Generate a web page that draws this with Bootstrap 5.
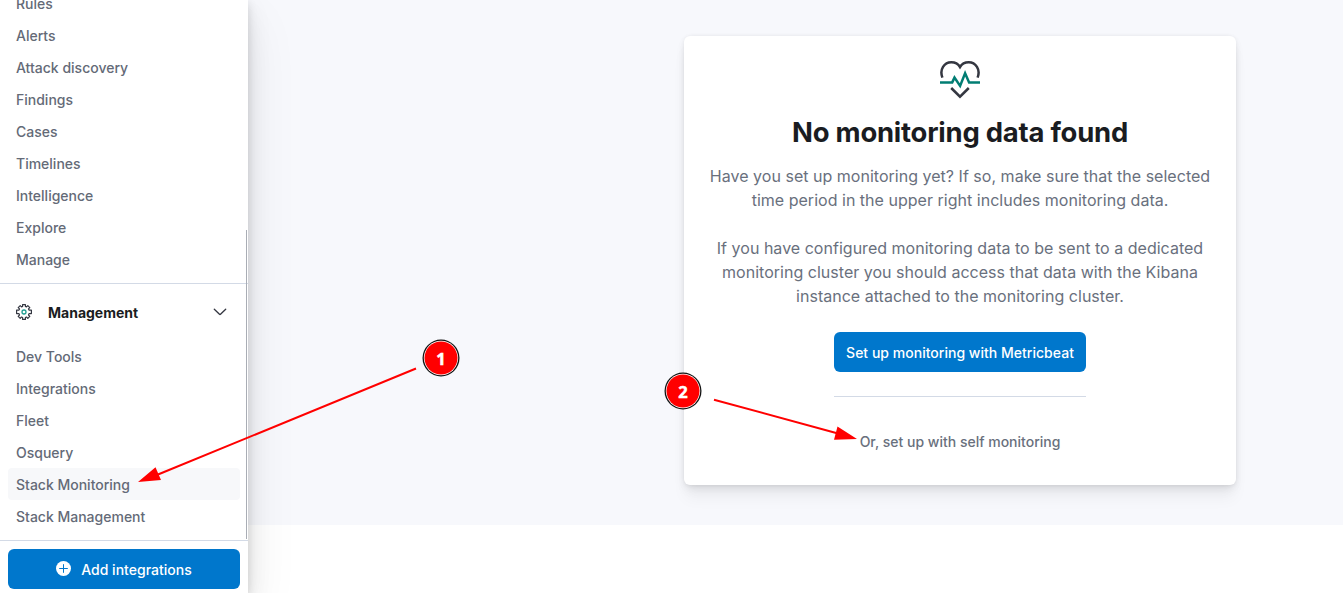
<!DOCTYPE html>
<html lang="en">
<head>
<meta charset="utf-8">
<meta name="viewport" content="width=device-width, initial-scale=1">
<title>Stack Monitoring</title>
<link href="https://cdn.jsdelivr.net/npm/bootstrap@5.3.0/dist/css/bootstrap.min.css" rel="stylesheet">
<style>
  body { font-family: Inter, sans-serif; font-size: 14px; color: #69707d; height: 100vh; overflow: hidden; background: #fff; }
  .side { width: 248px; z-index: 2; box-shadow: 0 2.7px 9px rgba(0,0,0,.13), 0 9.4px 24px rgba(0,0,0,.09), 0 21.8px 50px rgba(0,0,0,.08); }
  .side-scroll { height: 540px; }
  .side-list { padding: 0 8px; }
  .side-list.first { margin-top: -12px; }
  .side-list .nav-link { height: 32px; padding: 0 8px; line-height: 32px; color: #646a77; font-weight: 500; border-radius: 4px; }
  .side-list.lower .nav-link { line-height: 34px; }
  .side-list .nav-link.active { background: #f7f8fa; }
  .group-head { margin-top: 7px; border-top: 1px solid #d3dae6; height: 57px; padding: 0 20px 0 16px; color: #1a1c21; }
  .group-title { font-weight: 700; letter-spacing: 0; margin-left: 16px; }
  .scroll-thumb { right: 1px; top: 230px; width: 1px; height: 309px; background: #a9adb5; }
  .side-foot { border-top: 1px solid #d3dae6; padding: 8px; height: 53px; }
  .btn-fill { height: 40px; background: #0077cc; color: #fff; font-size: 14px; font-weight: 500; letter-spacing: .02px; border-radius: 6px; border: 0; padding: 0 8px; white-space: nowrap; }
  .btn-fill:hover { background: #0071c2; color: #fff; }
  .btn-fill svg { margin-right: 1px; }
  .page-area { height: 525px; background: #f7f8fc; padding: 36px 107px 0 0; }
  .prompt { width: 552px; height: 449px; border: 0; border-radius: 6px; padding: 24px; color: #69707d;
    box-shadow: 0 .9px 4px -1px rgba(0,0,0,.08), 0 2.6px 8px -1px rgba(0,0,0,.06), 0 5.7px 12px -1px rgba(0,0,0,.05), 0 15px 15px -1px rgba(0,0,0,.04); }
  .prompt h2 { font-size: 27.43px; line-height: 32px; font-weight: 700; color: #1a1c21; margin: 16px 0; letter-spacing: -.22px; }
  .prompt p { font-size: 16px; line-height: 24px; margin: 0 0 24px; letter-spacing: .02px; }
  .prompt .btn-fill { width: 252px; }
  .divider { width: 252px; height: 1px; background: #d3dae6; margin: 24px 0; }
  .btn-plain { height: 40px; padding: 0 8px; font-size: 14px; font-weight: 500; color: #69707d; border: 0; }
  .annotations { z-index: 5; pointer-events: none; }
  .annotations text { font-family: "Noto Sans", sans-serif; font-weight: 700; font-size: 16.500px; fill: #fff; stroke: #fff; stroke-width: .5px; text-anchor: middle; }
</style>
</head>
<body>
<div class="d-flex h-100">
  <aside class="side bg-white position-relative flex-shrink-0 d-flex flex-column">
    <div class="side-scroll overflow-hidden">
      <nav class="side-list first nav flex-column flex-nowrap">
        <a class="nav-link" href="#">Rules</a>
        <a class="nav-link" href="#">Alerts</a>
        <a class="nav-link" href="#">Attack discovery</a>
        <a class="nav-link" href="#">Findings</a>
        <a class="nav-link" href="#">Cases</a>
        <a class="nav-link" href="#">Timelines</a>
        <a class="nav-link" href="#">Intelligence</a>
        <a class="nav-link" href="#">Explore</a>
        <a class="nav-link" href="#">Manage</a>
      </nav>
      <div class="group-head d-flex align-items-center">
        <svg width="16" height="16" viewBox="0 0 16 16" fill="none">
          <path stroke="#343741" stroke-width="1.200" stroke-linejoin="round" d="M6.600.6h2.800v1.800l1.100.5 1.300-1.300 2 2-1.300 1.300.5 1.200h2.400v3.500H13l-.5 1.400 1.300 1.300-2 2-1.300-1.300-1.100.5v1.900H6.600v-1.900l-1.100-.5-1.300 1.300-2-2 1.300-1.300L3 9.600H.6V6.100H3l.5-1.200-1.300-1.300 2-2 1.300 1.300 1.100-.5z"/>
          <circle cx="8" cy="8" r="2" stroke="#209e91" stroke-width="1.300"/>
        </svg>
        <span class="group-title">Management</span>
        <svg class="ms-auto" width="16" height="16" viewBox="0 0 16 16" fill="none" stroke="#343741" stroke-width="1.300" stroke-linecap="round" stroke-linejoin="round"><path d="M2.300 5.200 7.500 10.300a.7.7 0 0 0 1 0L13.700 5.200"/></svg>
      </div>
      <nav class="side-list lower nav flex-column flex-nowrap">
        <a class="nav-link" href="#">Dev Tools</a>
        <a class="nav-link" href="#">Integrations</a>
        <a class="nav-link" href="#">Fleet</a>
        <a class="nav-link" href="#">Osquery</a>
        <a class="nav-link active" href="#">Stack Monitoring</a>
        <a class="nav-link" href="#">Stack Management</a>
      </nav>
    </div>
    <div class="scroll-thumb position-absolute"></div>
    <div class="side-foot">
      <button class="btn btn-fill w-100 d-flex align-items-center justify-content-center gap-2">
        <svg width="16" height="16" viewBox="0 0 16 16"><circle cx="7.500" cy="7.500" r="7.500" fill="#fff"/><path d="M7.500 3.200v8.600M3.200 7.500h8.600" stroke="#0077cc" stroke-width="1"/></svg>
        <span>Add integrations</span>
      </button>
    </div>
  </aside>
  <main class="flex-grow-1">
    <div class="page-area d-flex justify-content-end">
      <section class="card prompt align-items-center text-center">
        <svg width="40" height="40" viewBox="0 0 40 40" fill="none" stroke-width="2.500">
          <path stroke="#343741" d="M2.400 17.600C-.8 9.500 4.300 2.300 11.300 2.300c3.800 0 6.800 1.500 8.700 4.700 1.900-3.200 4.900-4.700 8.700-4.700 7 0 12.100 7.200 8.900 15.300M11.200 28 20 36.700l8.800-8.700"/>
          <path stroke="#017d73" d="M0 22.400h12.200l2.300-4.800 5.600 8.300 5-12.600 4 9.100H40"/>
        </svg>
        <h2>No monitoring data found</h2>
        <p>Have you set up monitoring yet? If so, make sure that the selected time period in the upper right includes monitoring data.</p>
        <p>If you have configured monitoring data to be sent to a dedicated monitoring cluster you should access that data with the Kibana instance attached to the monitoring cluster.</p>
        <button class="btn btn-fill">Set up monitoring with Metricbeat</button>
        <div class="divider"></div>
        <button class="btn btn-plain">Or, set up with self monitoring</button>
      </section>
    </div>
  </main>
</div>
<svg class="annotations position-absolute top-0 start-0" width="1343" height="593" viewBox="0 0 1343 593">
  <g stroke="#f00" stroke-width="2"><path d="M416 368.500 158 474.500M714 399.700 838 433.500"/></g>
  <path fill="#f00" d="m138 482 17.500-14.800 5.500 12.800zM857 439l-19.500-12.500-3.500 13.300z"/>
  <g id="pin-1"><circle cx="441" cy="358" r="18.500" fill="#111"/><circle cx="441" cy="358" r="17.200" fill="#fff"/><circle cx="441" cy="358" r="16.500" fill="#f00"/><text x="441" y="364.500">1</text></g>
  <g id="pin-2"><circle cx="683" cy="391" r="18.500" fill="#111"/><circle cx="683" cy="391" r="17.200" fill="#fff"/><circle cx="683" cy="391" r="16.500" fill="#f00"/><text x="683" y="397.500">2</text></g>
</svg>
<script src="https://cdn.jsdelivr.net/npm/bootstrap@5.3.0/dist/js/bootstrap.bundle.min.js"></script>
</body>
</html>
